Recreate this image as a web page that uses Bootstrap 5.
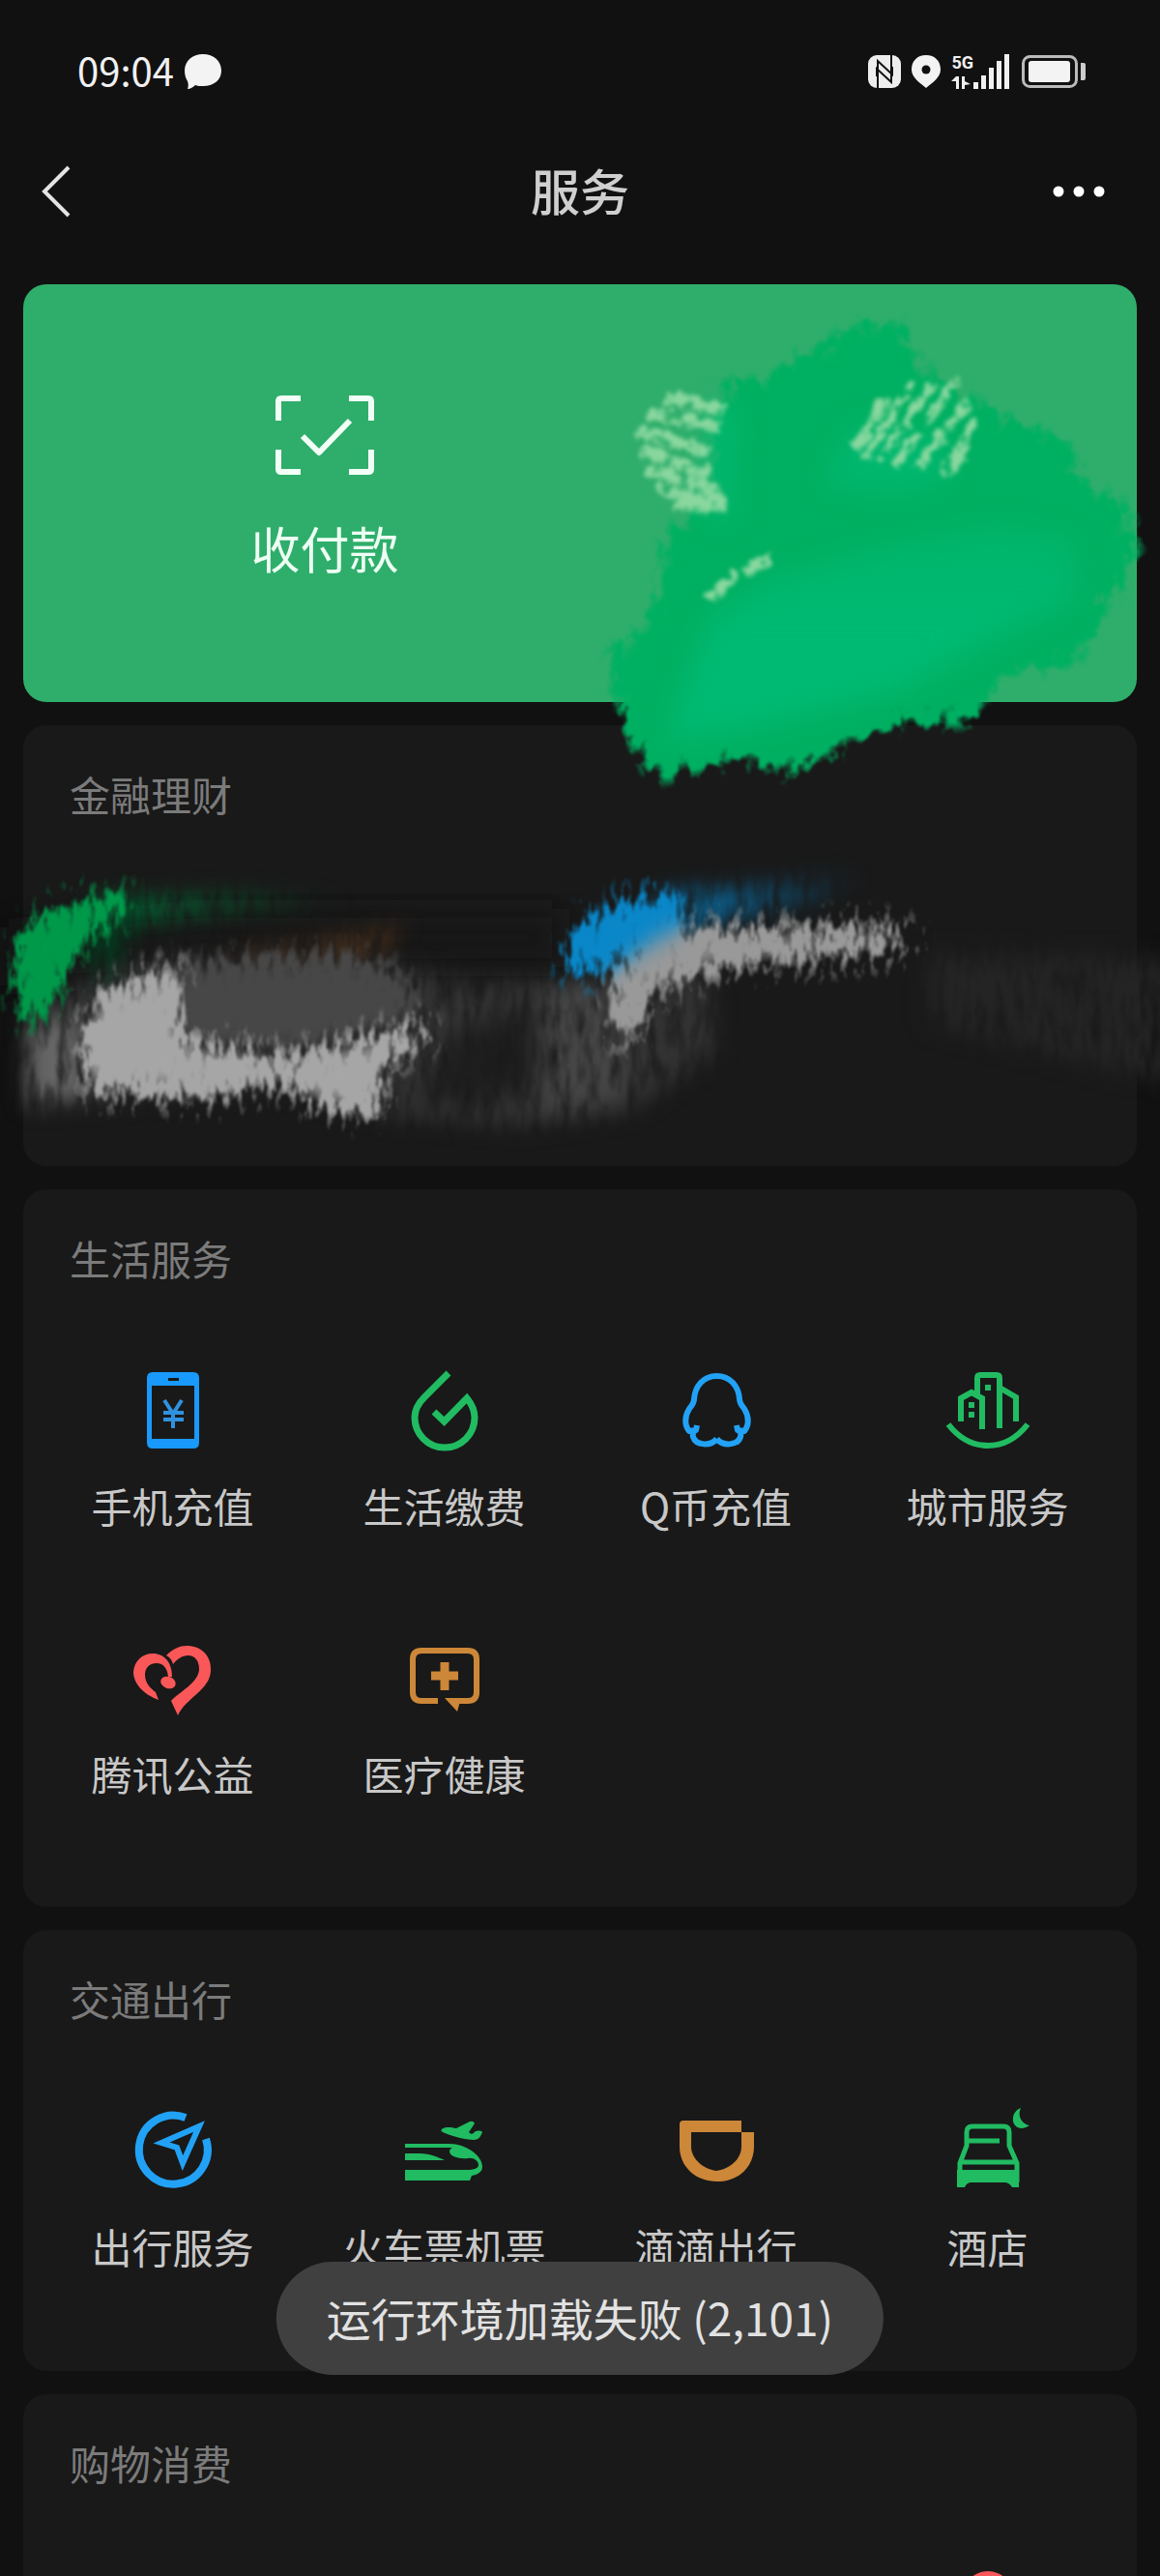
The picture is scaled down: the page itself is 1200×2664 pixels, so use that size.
<!DOCTYPE html>
<html lang="zh-CN" data-bs-theme="dark">
<head>
<meta charset="utf-8">
<meta name="viewport" content="width=device-width, initial-scale=1">
<title>服务</title>
<link href="https://cdn.jsdelivr.net/npm/bootstrap@5.3.0/dist/css/bootstrap.min.css" rel="stylesheet">
<style>
  body { background: #111; color: #c8c8c8; font-family: "Noto Sans CJK SC", sans-serif; font-size: 42px; line-height: 60px; height: 100vh; }
  svg { display: block; overflow: visible; }
  a, a:hover { color: inherit; text-decoration: none; }
  .status-bar { height: 148px; padding: 0 76px 0 80px; color: #f0f0f0; font-size: 40px; }
  .clock { margin-bottom: 4px; }
  .net-label { font: 700 18px/18px Roboto, sans-serif; color: #f0f0f0; }
  .title-bar { height: 100px; padding: 0 42px; margin-bottom: 46px; }
  .title-bar h1 { font-size: 51px; line-height: 60px; font-weight: 500; color: #cfcfcf; }
  .icon-btn { background: none; border: 0; padding: 0; width: 70px; }
  .title-bar h1, .pay-item span { padding-bottom: 4px; }
  .page-main { padding: 0 24px; gap: 24px; min-height: 0; overflow: hidden; }
  .pay-panel { background: #2fae6b; border-radius: 24px; height: 432px; padding: 0 48px; color: #eefff4; font-size: 51px; }
  .pay-item { padding-top: 115px; gap: 45px; }
  .svc-panel { background: #191919; border-radius: 24px; padding: 41px 14px 99px; }
  .svc-panel h2 { font-size: 42px; line-height: 60px; font-weight: 400; color: #7b7b7b; margin: 0 0 86px 34px; }
  .svc-blank { min-height: 456px; }
  .svc-tall { padding-bottom: 108px; }
  .svc-grid { row-gap: 107px; }
  .svc-item { gap: 26px; white-space: nowrap; }
  .scribble { left: 0; top: 294px; width: 100%; pointer-events: none; z-index: 1; overflow: hidden; }
  .toast-pill { bottom: 208px; left: 50%; transform: translateX(-50%); z-index: 2; background: #404040; color: #e2e2e2; font-size: 46px; border-radius: 59px; padding: 27px 52px 30px; white-space: nowrap; }
  .c-blue { color: #22a2f6; } .c-green { color: #21bb62; } .c-red { color: #fa5759; } .c-gold { color: #cc8738; }
</style>
<script src="https://cdn.jsdelivr.net/npm/bootstrap@5.3.0/dist/js/bootstrap.bundle.min.js"></script>
</head>
<body class="d-flex flex-column position-relative overflow-hidden">

<div class="status-bar d-flex align-items-center justify-content-between flex-shrink-0">
  <div class="d-flex align-items-center gap-2">
    <span class="clock">09:04</span>
    <svg width="40" height="36" viewBox="0 0 40 36" fill="#f3f3f3"><path d="M22 0C33 0 41 7 41 17s-8 16-19 16c-3 0-6 0-8-1-2 2-5 4-8 4 1-3 1-5 0-8-2-3-3-7-3-11C3 7 11 0 22 0z"/></svg>
  </div>
  <div class="d-flex align-items-center">
    <svg class="me-2" width="36" height="34" viewBox="0 0 36 34"><rect x="0" y="0" width="34" height="34" rx="9" fill="#eee"/><path d="M10 34V6l15 14V12M24 0v28L9 14v8" fill="none" stroke="#111" stroke-width="2"/></svg>
    <svg width="34" height="34" viewBox="0 0 34 34"><path d="M16 0c9 0 15 6 15 15 0 8-9 14-15 19C10 29 1 23 1 15 1 6 7 0 16 0z" fill="#f3f3f3"/><circle cx="16" cy="15" r="4.500" fill="#111"/></svg>
    <div class="ms-2">
      <div class="net-label">5G</div>
      <svg width="20" height="18" viewBox="0 0 20 18" fill="#eee"><path d="M5 5h3v13H5v-8H0zM11 5h3v5l6 3-6 1v4h-3z"/></svg>
    </div>
    <svg width="50" height="36" viewBox="0 0 50 36" fill="#f0f0f0"><path d="M0 29h5v7H0zM8 22h5v14H8zM16 14h5v22h-5zM24 7h5v29h-5zM32 0h5v36h-5z"/></svg>
    <svg width="67" height="34" viewBox="0 0 67 34"><rect x="1.500" y="1.500" width="55" height="31" rx="7" fill="none" stroke="#bbb" stroke-width="3"/><rect x="7" y="6" width="43" height="22" rx="3" fill="#f3f3f3"/><path d="M61 8h3q2 0 2 2v14q0 2-2 2h-3z" fill="#ccc"/></svg>
  </div>
</div>

<header class="title-bar d-flex align-items-center flex-shrink-0">
  <button class="icon-btn" type="button" aria-label="返回"><svg width="58" height="54" viewBox="0 0 58 54"><path d="M29 2L4 27l25 25" fill="none" stroke="#e4e4e4" stroke-width="4"/></svg></button>
  <h1 class="m-0 flex-fill text-center">服务</h1>
  <button class="icon-btn" type="button" aria-label="更多"><svg width="58" height="14" viewBox="0 0 58 14" fill="#fff"><circle cx="7" cy="7" r="5.500"/><circle cx="28" cy="7" r="5.500"/><circle cx="49" cy="7" r="5.500"/></svg></button>
</header>

<main class="page-main d-flex flex-column flex-grow-1">
  <section class="pay-panel d-flex flex-shrink-0">
    <a href="#" class="pay-item w-50 d-flex flex-column align-items-center">
      <svg width="102" height="82" viewBox="0 0 102 82" fill="none" stroke="#f2fff6" stroke-width="6"><path d="M3 26V6q0-3 3-3h20M76 3h20q3 0 3 3v20M99 56v20q0 3-3 3H76M26 79H6q-3 0-3-3V56M28 42l17 17 32-33" stroke-linejoin="round"/></svg>
      <span>收付款</span>
    </a>
  </section>

  <section class="svc-panel svc-blank flex-shrink-0"><h2>金融理财</h2></section>

  <section class="svc-panel svc-tall flex-shrink-0">
    <h2>生活服务</h2>
    <div class="svc-grid row g-0 row-cols-4 text-center">
      <a href="#" class="svc-item col d-flex flex-column align-items-center">
        <svg class="c-blue" width="84" height="84" viewBox="0 0 84 84"><path fill="#1899fb" fill-rule="evenodd" d="M21 2h42q6 0 6 6v67q0 6-6 6H21q-6 0-6-6V8q0-6 6-6zM20 16v55h44V16zM37 8v3h11V8z"/><path d="M33 31l9 14 9-14M32 44h21M32 51h21M42 43v17" fill="none" stroke="#2f92e0" stroke-width="4"/></svg>
        <span>手机充值</span></a>
      <a href="#" class="svc-item col d-flex flex-column align-items-center">
        <svg class="c-green" width="84" height="84" viewBox="0 0 84 84" fill="none" stroke="currentColor" stroke-width="7"><path d="M46 3L21 28C14 35 11 42 11 49a31 31 0 0 0 62 0C73 42 70 35 65 29L41.500 53 31 43"/></svg>
        <span>生活缴费</span></a>
      <a href="#" class="svc-item col d-flex flex-column align-items-center">
        <svg class="c-blue" width="84" height="84" viewBox="0 0 84 84" fill="none" stroke="currentColor" stroke-width="6" stroke-linejoin="round"><path d="M42.500 71C36 79 21 78 18 69c-1-3 0-5 2-8M42.500 71C49 79 64 78 67 69c1-3 0-5-2-8M22 57l-1 5-7 1C9 57 9 48 14 40c3-4 5-6 5-10C20 16 29 6 42.500 6S65 16 66 30c0 4 2 6 5 10 5 8 5 17 0 23l-7-1-1-5"/></svg>
        <span>Q币充值</span></a>
      <a href="#" class="svc-item col d-flex flex-column align-items-center">
        <svg class="c-green" width="84" height="84" viewBox="0 0 84 84" fill="none" stroke="currentColor" stroke-width="6"><path d="M1 56Q18 78 42 78T83 56M14 53V29l11-6 11 6v32M31 27V8q0-3 3-3h17q3 0 3 3v52M54 18l17 10v25"/><path fill="currentColor" stroke="none" d="M39 15h6v6h-6zM22 33h6v6h-6zM22 43h6v6h-6z"/></svg>
        <span>城市服务</span></a>
      <a href="#" class="svc-item col d-flex flex-column align-items-center">
        <svg class="c-red" width="84" height="84" viewBox="0 0 84 84" fill="currentColor"><path d="M27 64C11 58 1 47 1 35 2 23 11 16 21 16c12 0 20 9 20 24h-4C36 30 31 26 25 26c-8 0-12 5-12 12 0 9 6 14 11 18zM35 18C42 11 49 8 56 8c15 0 26 10 25 26C80 54 55 62 47 80l-7-15c8-9 29-19 29-33 0-9-5-14-11-14-7 0-12 4-16 9-1-4-3-7-7-9z"/><ellipse cx="37" cy="46" rx="8" ry="6" transform="rotate(20 37 46)"/></svg>
        <span>腾讯公益</span></a>
      <a href="#" class="svc-item col d-flex flex-column align-items-center">
        <svg class="c-gold" width="84" height="84" viewBox="0 0 84 84" fill="none" stroke="currentColor" stroke-width="6"><path d="M35 65H18q-9 0-9-9V22q0-9 9-9h48q9 0 9 9v34q0 9-9 9H50"/><path d="M42 25v29M28 39h28" stroke-width="9"/><path d="M42 62h17l-4 14z" fill="currentColor" stroke="none"/></svg>
        <span>医疗健康</span></a>
    </div>
  </section>

  <section class="svc-panel flex-shrink-0">
    <h2>交通出行</h2>
    <div class="svc-grid row g-0 row-cols-4 text-center">
      <a href="#" class="svc-item col d-flex flex-column align-items-center">
        <svg class="c-blue" width="84" height="84" viewBox="0 0 84 84" fill="none" stroke="currentColor"><path d="M55 7A35.500 35.500 0 1 0 76 29" stroke-width="8"/><path d="M69 16L30 33l16 5 6 16z" stroke-width="6"/></svg>
        <span>出行服务</span></a>
      <a href="#" class="svc-item col d-flex flex-column align-items-center">
        <svg class="c-green" width="84" height="84" viewBox="0 0 84 84" fill="currentColor"><path d="M1 34h46c17 0 34 12 34 24 0 5-5 8-11 9l-2 5H1V61h63c9 0 13-2 13-5 0-4-5-8-11-7-9 1-19-2-19-7 0-2 1-3 3-4H1zM1 44h15c12 0 19 4 26 7H1zM39 19c3-3 10-2 15-1l14-7q4-1 5 2l-6 9q2 3 5 1c2-3 7-3 9-1-2 5-4 8-9 8-9 0-23-4-32-8-2-1-2-2-1-3z"/></svg>
        <span>火车票机票</span></a>
      <a href="#" class="svc-item col d-flex flex-column align-items-center">
        <svg class="c-gold" width="84" height="84" viewBox="0 0 84 84" fill="currentColor"><path d="M8 10h60v12H16v15c0 12 12 23 26 25 15-2 26-13 26-25V22h13v15c0 21-16 36-38 36S4 58 4 37V14q0-4 4-4z"/></svg>
        <span>滴滴出行</span></a>
      <a href="#" class="svc-item col d-flex flex-column align-items-center">
        <svg class="c-green" width="84" height="84" viewBox="0 0 84 84"><path d="M13 74V54l7-18V22q0-6 6-6h32q6 0 6 6v14l8 18v20M13 53h58M20 31h34" fill="none" stroke="currentColor" stroke-width="5"/><path d="M10 61h64v18h-7q-3-5-8-5H25q-5 0-7 5h-8zM76-3c-4 8 1 17 9 18-10 7-18 0-17-7 0-5 3-9 8-11z" fill="currentColor"/></svg>
        <span>酒店</span></a>
    </div>
  </section>

  <section class="svc-panel flex-shrink-0">
    <h2>购物消费</h2>
    <div class="svc-grid row g-0 row-cols-4">
      <div class="svc-item col offset-9 d-flex flex-column align-items-center">
        <svg class="c-red" width="84" height="84" viewBox="0 0 84 84"><circle cx="42" cy="22" r="26" fill="currentColor"/></svg>
      </div>
    </div>
  </section>
</main>

<svg class="scribble position-absolute" viewBox="0 294 1200 912" aria-hidden="true">
  <defs>
    <filter id="edge" x="-10%" y="-10%" width="120%" height="120%" color-interpolation-filters="sRGB">
      <feGaussianBlur in="SourceGraphic" stdDeviation="9" result="soft"/>
      <feComponentTransfer in="soft" result="fat"><feFuncA type="linear" slope="30"/></feComponentTransfer>
      <feTurbulence type="fractalNoise" baseFrequency="0.07 0.05" numOctaves="4" seed="4"/>
      <feColorMatrix values="0 0 0 0 0  0 0 0 0 0  0 0 0 0 0  3 0 0 0 -1" result="grain"/>
      <feComposite in="soft" in2="grain" operator="arithmetic" k2="2.400" k3="1.300" k4="-1.400" result="cut"/>
      <feComposite in="fat" in2="cut" operator="in"/><feGaussianBlur stdDeviation="1"/>
    </filter>
    <filter id="streak" x="-20%" y="-20%" width="140%" height="140%" color-interpolation-filters="sRGB">
      <feTurbulence type="fractalNoise" baseFrequency="0.08" numOctaves="3" seed="7" result="noise"/>
      <feDisplacementMap in="SourceGraphic" in2="noise" scale="16" xChannelSelector="R" yChannelSelector="G" result="bent"/>
      <feColorMatrix in="noise" values="0 0 0 0 0  0 0 0 0 0  0 0 0 0 0  0 5 0 0 -1.500" result="grain"/>
      <feComposite in="bent" in2="grain" operator="in"/><feGaussianBlur stdDeviation="2"/>
    </filter>
    <filter id="brush" x="-20%" y="-40%" width="140%" height="180%" color-interpolation-filters="sRGB">
      <feGaussianBlur in="SourceGraphic" stdDeviation="9 13" result="soft"/>
      <feComponentTransfer in="soft" result="fat"><feFuncA type="linear" slope="30"/></feComponentTransfer>
      <feTurbulence type="fractalNoise" baseFrequency="0.13 0.05" numOctaves="4" seed="9"/>
      <feColorMatrix values="0 0 0 0 0  0 0 0 0 0  0 0 0 0 0  3 0 0 0 -1" result="grain"/>
      <feComposite in="soft" in2="grain" operator="arithmetic" k2="2" k3="1.200" k4="-1" result="cut"/>
      <feComposite in="fat" in2="cut" operator="in"/><feGaussianBlur stdDeviation="1"/>
    </filter>
    <filter id="mist" x="-30%" y="-40%" width="160%" height="180%" color-interpolation-filters="sRGB">
      <feGaussianBlur in="SourceGraphic" stdDeviation="11" result="soft"/>
      <feTurbulence type="fractalNoise" baseFrequency="0.1 0.025" numOctaves="4" seed="2"/>
      <feColorMatrix values="0 0 0 0 0  0 0 0 0 0  0 0 0 0 0  1.800 0 0 0 -0.100" result="grain"/>
      <feComposite in="soft" in2="grain" operator="in" result="tex"/>
      <feGaussianBlur in="tex" stdDeviation="1"/>
    </filter>
    <filter id="glow" x="-20%" y="-20%" width="140%" height="140%"><feGaussianBlur stdDeviation="14"/></filter>
    <linearGradient id="gtail"><stop offset="0" stop-color="#00753a"/><stop offset="1" stop-color="#00753a" stop-opacity="0"/></linearGradient>
    <linearGradient id="btail"><stop offset="0" stop-color="#0873ad"/><stop offset="1" stop-color="#0873ad" stop-opacity="0"/></linearGradient>
    <linearGradient id="lower" x1="0" y1="0" x2="0" y2="1"><stop offset="0" stop-color="#00b972" stop-opacity=".6"/><stop offset=".5" stop-color="#00b972"/></linearGradient>
  </defs>
  <g filter="url(#edge)">
    <path fill="#00b062" d="M638 726L631 673 661 651 682 612 688 551 722 530 745 508 734 451 749 423 745 398 791 391 822 369 864 351 891 330 937 337 944 373 1006 416 1044 433 1109 455 1113 491 1163 523 1176 566 1162 608 1136 623 1143 648 1113 683 1032 701 1010 745 925 751 868 776 814 801 772 787 730 791 684 806 662 787z"/>
  </g>
  <g filter="url(#glow)">
    <path fill="url(#lower)" d="M735 640L800 598 920 566 1030 545 1110 560 1110 620 1000 675 930 715 780 752 690 765 715 690z"/>
    <path fill="#00b972" opacity=".8" d="M850 500L885 440 975 450 980 495 930 510zM732 420l30 6-8 120-25-20z"/>
  </g>
  <g fill="none" stroke="#8ad79f" filter="url(#streak)">
    <path stroke-width="14" d="M688 412l62 12M670 428l76 14M658 446l76 22M662 466l72 24M670 486l78 24M682 506l70 18M698 520l36 6"/>
    <path stroke-width="10" d="M918 412l-34 54M944 398l-50 76M966 396l-58 82M990 392l-64 90M1004 412l-54 72M1008 438l-34 54M1002 462l-20 28"/>
    <path stroke-width="12" d="M736 620l24-26M768 592l30-14"/>
  </g>
  <path fill="#121212" filter="url(#glow)" d="M0 960l200-20h380v60l-200 0-380 20z" opacity=".7"/>
  <g filter="url(#mist)">
    <path fill="#323232" d="M30 1040L153 990 352 988 490 1015 640 1015 735 1000 740 1090 650 1150 540 1165 400 1155 291 1123 30 1145z"/>
    <path fill="#1e1e1e" d="M470 1070L550 1040 550 1130 430 1140z"/>
    <path fill="#242424" d="M960 985L1210 990 1210 1120 1040 1080 960 1060z"/>
    <path fill="#454545" d="M565 1020L640 1010 645 1090 648 1135 560 1155z"/>
    <path fill="#666" d="M28 1060L80 1050 90 1133 28 1143z"/>
    <path fill="url(#gtail)" d="M95 930L260 924 370 932 220 945 100 960z"/>
    <path fill="url(#btail)" d="M680 925L790 914 900 902 840 935 690 965z"/>
    <path fill="#7a451d" opacity=".4" d="M215 990L300 975 420 955 400 985 350 992z"/>
    <path fill="#00401f" d="M85 950l70-15-50 90z" opacity=".8"/>
  </g>
  <g filter="url(#brush)"><path fill="#474747" d="M135 1000L352 990 405 1002 440 1050 306 1088 190 1080z"/></g>
  <g filter="url(#brush)">
    <path fill="#a6a6a6" d="M186 1003L187 1077 306 1093 434 1060 450 1068 394 1104 394 1152 337 1146 291 1118 230 1134 92 1128 85 1070 105 1025z"/>
    <path fill="#999" d="M632 1070L635 1010 680 970 711 962 903 958 955 970 918 984 765 998 711 1009 668 1030 658 1075z"/>
    <path fill="#00994a" d="M18 1045L14 987 36 950 78 932 136 926 126 948 84 972 70 1010 38 1056z"/>
    <path fill="#0987c9" d="M580 1000L598 956 648 932 706 926 704 958 640 994 600 1007z"/>
  </g>
</svg>

<div class="toast-pill position-absolute" role="status">运行环境加载失败 (2,101)</div>
</body>
</html>
